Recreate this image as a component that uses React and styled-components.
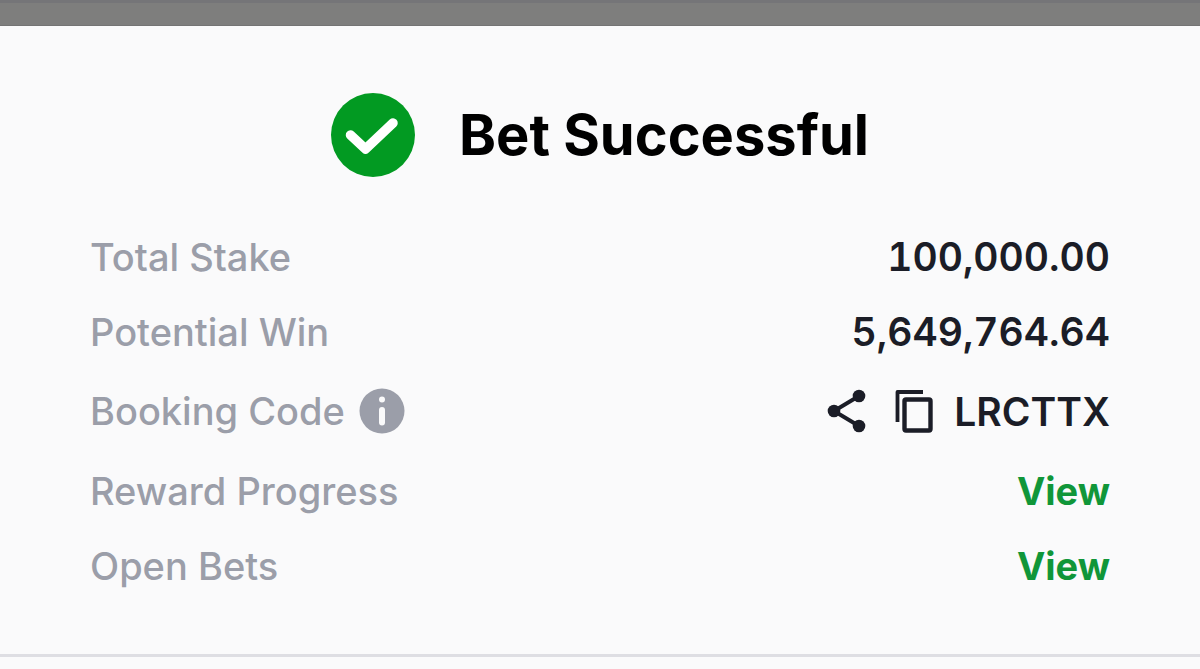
import React from "react";
import styled, { createGlobalStyle } from "styled-components";

const GlobalStyle = createGlobalStyle`
    * {
        box-sizing: border-box;
    }
    body {
        margin: 0;
        background-color: #fafafb;
        font-family: Inter, "Liberation Sans", sans-serif;
    }
`;

const Backdrop = styled.div`
    height: 26px;
    border-top: 3px solid #757578;
    border-bottom: 1px solid #747474;
    background-color: #7e7e7d;
`;

const Sheet = styled.main`
    padding: 67px 90px 51px;
    border-bottom: 3px solid #dedee3;
`;

const Header = styled.header`
    display: flex;
    align-items: center;
    justify-content: center;
    gap: 44px;
    margin-bottom: 42px;
`;

const Title = styled.h1`
    margin: 0;
    font-size: 56px;
    line-height: 84px;
    font-weight: 700;
    color: #000;
`;

const Row = styled.div`
    display: flex;
    align-items: center;
    justify-content: space-between;
    height: ${props => (props.$tall ? "84px" : "75px")};
`;

const Label = styled.span`
    display: flex;
    align-items: center;
    gap: 14px;
    font-size: 38px;
    font-weight: 500;
    color: #9b9ea9;
`;

const Value = styled.span`
    display: flex;
    align-items: center;
    font-size: 39px;
    font-weight: 600;
    font-variant-numeric: tabular-nums;
    color: #1b1d27;
`;

const IconButton = styled.button`
    display: flex;
    margin: 0 20px 0 0;
    padding: 0;
    border: 0;
    background: none;
    color: inherit;
`;

const ViewLink = styled.a`
    font-size: 38px;
    font-weight: 700;
    color: #109639;
    text-decoration: none;
`;

const CheckIcon = () => (
    <svg width="84" height="84" viewBox="0 0 84 84" aria-hidden="true">
        <circle cx="42" cy="42" r="42" fill="#029a22" />
        <path d="M19.5 42L34.5 56L62 30" fill="none" stroke="#fff" strokeWidth="9.5" strokeLinecap="round" strokeLinejoin="round" />
    </svg>
);

const InfoIcon = () => (
    <svg width="46" height="46" viewBox="0 0 46 46" aria-hidden="true">
        <circle cx="23" cy="23" r="22.5" fill="#9b9ea9" />
        <circle cx="23" cy="11.5" r="3" fill="#fafafb" />
        <path d="M23 22V34.5" stroke="#fafafb" strokeWidth="6" strokeLinecap="round" />
    </svg>
);

const ShareIcon = () => (
    <svg width="48" height="48" viewBox="0 0 48 48" aria-hidden="true">
        <path d="M33 9L8 24L33 39" fill="none" stroke="currentColor" strokeWidth="4" />
        <circle cx="33" cy="9" r="6.3" fill="currentColor" />
        <circle cx="8" cy="24" r="6.3" fill="currentColor" />
        <circle cx="33" cy="39" r="6.3" fill="currentColor" />
    </svg>
);

const CopyIcon = () => (
    <svg width="40" height="44" viewBox="0 0 40 44" fill="none" stroke="currentColor" strokeLinejoin="round" aria-hidden="true">
        <path d="M3.5 33V3H29" strokeWidth="3.8" />
        <rect x="10.5" y="10.5" width="26" height="31" rx="1.5" strokeWidth="4.4" />
    </svg>
);

export default () => {
    return (
        <>
            <GlobalStyle />
            <Backdrop />
            <Sheet>
                <Header>
                    <CheckIcon />
                    <Title>Bet Successful</Title>
                </Header>
                <Row>
                    <Label>Total Stake</Label>
                    <Value>100,000.00</Value>
                </Row>
                <Row>
                    <Label>Potential Win</Label>
                    <Value>5,649,764.64</Value>
                </Row>
                <Row $tall>
                    <Label>Booking Code<InfoIcon /></Label>
                    <Value>
                        <IconButton aria-label="Share"><ShareIcon /></IconButton>
                        <IconButton aria-label="Copy"><CopyIcon /></IconButton>
                        LRCTTX
                    </Value>
                </Row>
                <Row>
                    <Label>Reward Progress</Label>
                    <ViewLink href="#rewards">View</ViewLink>
                </Row>
                <Row>
                    <Label>Open Bets</Label>
                    <ViewLink href="#bets">View</ViewLink>
                </Row>
            </Sheet>
        </>
    );
};
